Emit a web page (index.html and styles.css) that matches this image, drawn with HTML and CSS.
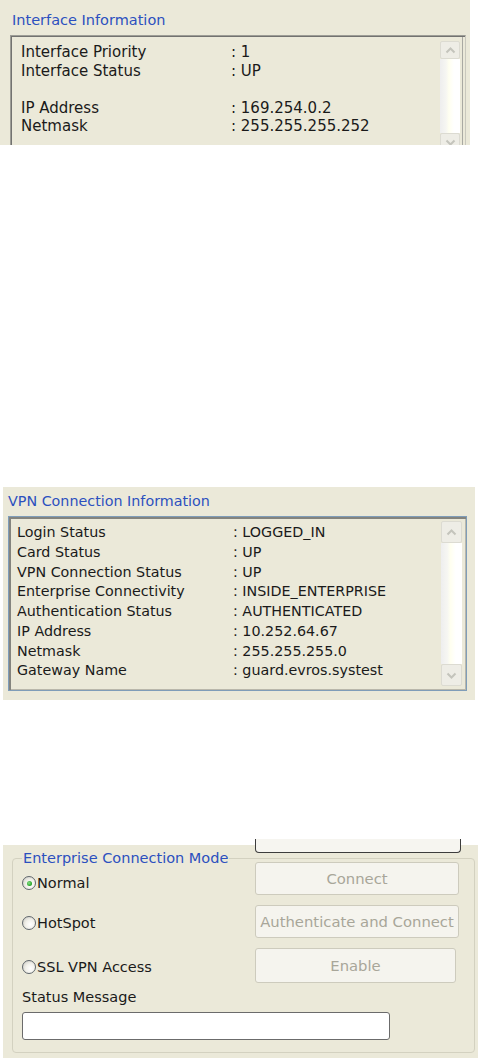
FILE: index.html
```html
<!DOCTYPE html>
<html>
<head>
<meta charset="utf-8">
<title>Connection Information</title>
<link rel="stylesheet" href="styles.css">
</head>
<body>
<section class="panel p-iface">
  <div class="title">Interface Information</div>
  <div class="listbox lb-iface">
    <div class="rows">
      <div class="row"><span class="k">Interface Priority</span><span class="v">: 1</span></div>
      <div class="row"><span class="k">Interface Status</span><span class="v">: UP</span></div>
      <div class="row"></div>
      <div class="row"><span class="k">IP Address</span><span class="v">: 169.254.0.2</span></div>
      <div class="row"><span class="k">Netmask</span><span class="v">: 255.255.255.252</span></div>
    </div>
    <div class="scroll">
      <div class="sb-btn"><svg width="11" height="7" viewBox="0 0 11 7"><path d="M1.5 5.5 L5.5 1.5 L9.5 5.5" fill="none" stroke="#c4c4bc" stroke-width="2"/></svg></div>
      <div class="track"></div>
      <div class="sb-btn"><svg width="11" height="7" viewBox="0 0 11 7"><path d="M1.5 1.5 L5.5 5.5 L9.5 1.5" fill="none" stroke="#c4c4bc" stroke-width="2"/></svg></div>
    </div>
  </div>
</section>

<section class="panel p-vpn">
  <div class="title">VPN Connection Information</div>
  <div class="listbox lb-vpn">
    <div class="rows">
      <div class="row"><span class="k">Login Status</span><span class="v">: LOGGED_IN</span></div>
      <div class="row"><span class="k">Card Status</span><span class="v">: UP</span></div>
      <div class="row"><span class="k">VPN Connection Status</span><span class="v">: UP</span></div>
      <div class="row"><span class="k">Enterprise Connectivity</span><span class="v">: INSIDE_ENTERPRISE</span></div>
      <div class="row"><span class="k">Authentication Status</span><span class="v">: AUTHENTICATED</span></div>
      <div class="row"><span class="k">IP Address</span><span class="v">: 10.252.64.67</span></div>
      <div class="row"><span class="k">Netmask</span><span class="v">: 255.255.255.0</span></div>
      <div class="row"><span class="k">Gateway Name</span><span class="v">: guard.evros.systest</span></div>
    </div>
    <div class="scroll">
      <div class="sb-btn"><svg width="11" height="7" viewBox="0 0 11 7"><path d="M1.5 5.5 L5.5 1.5 L9.5 5.5" fill="none" stroke="#c4c4bc" stroke-width="2"/></svg></div>
      <div class="track"></div>
      <div class="sb-btn"><svg width="11" height="7" viewBox="0 0 11 7"><path d="M1.5 1.5 L5.5 5.5 L9.5 1.5" fill="none" stroke="#c4c4bc" stroke-width="2"/></svg></div>
    </div>
  </div>
</section>

<section class="panel p-mode">
  <div class="clipped-btn"></div>
  <fieldset class="group">
    <legend>Enterprise Connection Mode</legend>
    <div class="mode-grid">
      <label class="radio r1"><span class="dot checked"></span>Normal</label>
      <div class="btn">Connect</div>
      <label class="radio"><span class="dot"></span>HotSpot</label>
      <div class="btn">Authenticate and Connect</div>
      <label class="radio"><span class="dot"></span>SSL VPN Access</label>
      <div class="btn btn-narrow">Enable</div>
    </div>
    <div class="status-label">Status Message</div>
    <div class="status-box"></div>
  </fieldset>
</section>
</body>
</html>
```

FILE: styles.css
```css
* { box-sizing: border-box; }
html, body { margin: 0; padding: 0; background: #ffffff; }
body {
  width: 478px;
  height: 1058px;
  overflow: hidden;
  font-family: "DejaVu Sans", Verdana, sans-serif;
  font-size: 14.5px;
  color: #1a1a1a;
}
.panel { background: #ebe9d9; }

.title { color: #2c50bf; height: 18px; line-height: 18px; white-space: nowrap; }

.listbox { display: flex; }
.rows { flex: 1; }
.row { display: flex; white-space: nowrap; }
.row .k { flex: none; }

.scroll { flex: none; display: flex; flex-direction: column; }
.sb-btn {
  flex: none;
  display: flex; align-items: center; justify-content: center;
  background: #eeede6;
  border: 1px solid #dcdbd2;
  border-radius: 2px;
}
.track { flex: 1; background: linear-gradient(to right, #eeeeee 0, #f6f6f2 30%, #fffff0 45%, #ffffff 70%); }

/* Interface panel */
.p-iface { width: 470px; height: 145px; overflow: hidden; padding: 11px 0 0 10px; }
.p-iface .title { padding-left: 2px; margin-bottom: 6px; font-size: 14.5px; }
.lb-iface {
  width: 456px; height: 120px;
  border: 1px solid; border-color: #9d9d96 #c9c8bd #c9c8bd #9d9d96;
  box-shadow: inset 1px 1px 0 #727270, inset -2px 0 0 #ebe9d9, inset -3px 0 0 #a9a9a2;
  font-size: 15px;
}
.lb-iface .rows { padding: 7px 0 0 10px; }
.lb-iface .row { height: 18.5px; line-height: 18.5px; }
.lb-iface .k { width: 210px; }
.lb-iface .scroll { width: 20px; margin: 5px 5px 0 0; height: 110px; }
.lb-iface .sb-btn { height: 18px; }

/* VPN panel */
.p-vpn { margin: 342px 0 0 3px; width: 472px; height: 213px; padding: 5px 0 0 5px; font-size: 14.3px; }
.p-vpn .title { margin-bottom: 6px; }
.lb-vpn {
  width: 459px; height: 175px;
  border: 1px solid #7f9db9;
  box-shadow: inset 2px 2px 0 #84847e, inset -1px -1px 0 #b9b7ab;
}
.lb-vpn .rows { padding: 6px 0 0 8px; }
.lb-vpn .row { height: 19.75px; line-height: 19.75px; }
.lb-vpn .k { width: 216px; }
.lb-vpn .scroll { width: 21px; margin: 4px 4px 4px 0; }
.lb-vpn .sb-btn { height: 22px; }

/* Mode panel */
.p-mode {
  position: relative;
  margin: 145px 0 0 3px; width: 475px; height: 213px;
  padding-top: 5px;
}
.clipped-btn {
  position: absolute; left: 252px; top: -6px;
  width: 206px; height: 14px;
  background: #f6f5f0;
  border: 1px solid #3d3d3d; border-top: none;
  border-radius: 0 0 4px 4px;
}
.group {
  margin: 0 0 0 9px; width: 463px;
  border: 1px solid #d3d1c0; border-radius: 4px;
  padding: 0 15px 12px 9px;
  min-width: 0;
}
.group legend {
  padding: 0 1px;
  color: #2c50bf;
  line-height: 16px;
  white-space: nowrap;
}
.mode-grid {
  margin-top: -4px;
  display: grid;
  grid-template-columns: 233px 204px;
  grid-template-rows: 33px 33px 35px;
  row-gap: 10px;
}
.radio { display: flex; align-items: center; gap: 1px; padding-top: 3px; white-space: nowrap; }
.radio.r1 { padding-top: 9px; }
.dot {
  width: 14px; height: 14px; flex: none;
  border-radius: 50%;
  border: 1px solid #5f666c;
  background: radial-gradient(circle at 62% 62%, #ffffff 0, #f1f0ea 45%, #c6c5bd 100%);
  position: relative;
}
.dot.checked::after {
  content: ""; position: absolute; left: 3.5px; top: 3.5px;
  width: 5px; height: 5px; border-radius: 50%;
  background: radial-gradient(circle at 40% 40%, #8be08b 0, #21a121 70%);
}
.btn {
  display: flex; align-items: center; justify-content: center;
  background: #f5f4ee;
  border: 1px solid #cdcbbd;
  border-radius: 3px;
  color: #a8a699;
  font-size: 14.8px;
  white-space: nowrap;
}
.btn-narrow { width: 201px; }
.status-label { margin-top: 6px; line-height: 16px; }
.status-box {
  margin-top: 7px;
  width: 368px; height: 28px;
  background: #ffffff;
  border: 1px solid #6b6b6b;
  border-radius: 3px;
}
```
